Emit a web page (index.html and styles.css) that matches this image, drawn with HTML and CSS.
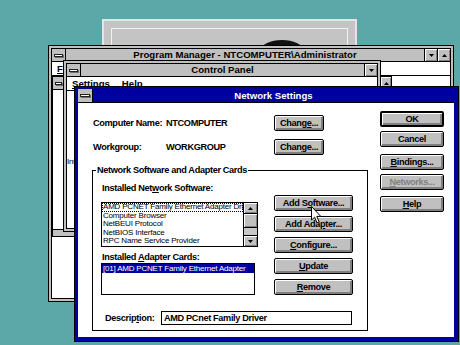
FILE: index.html
```html
<!DOCTYPE html>
<html>
<head>
<meta charset="utf-8">
<title>Network Settings</title>
<link rel="stylesheet" href="styles.css">
</head>
<body>
<div class="desktop">

  <div class="splash">
    <div class="splash-inner">
      <svg class="logo" width="44" height="12" viewBox="0 0 44 12"><ellipse cx="22" cy="11" rx="21" ry="10" fill="#111"/></svg>
    </div>
  </div>

  <div class="win pm">
    <div class="win-inner">
      <div class="titlebar">
        <div class="sysbox"><span class="sysbar"></span></div>
        <div class="title">Program Manager - NTCOMPUTER\Administrator</div>
        <div class="tbtn"><svg width="5" height="3" viewBox="0 0 5 3"><path d="M0 0H5L2.5 3Z"/></svg></div>
        <div class="tbtn"><svg width="5" height="3" viewBox="0 0 5 3"><path d="M0 3H5L2.5 0Z"/></svg></div>
      </div>
      <div class="menubar"><span class="menuitem"><u>F</u>ile</span></div>
      <div class="client">
        <div class="child">
          <div class="child-title">
            <div class="sysbox small"><span class="sysbar small"></span></div>
            <div class="child-caption"></div>
            <div class="tbtn small"><svg width="5" height="3" viewBox="0 0 5 3"><path d="M0 3H5L2.5 0Z"/></svg></div>
          </div>
          <div class="child-body"></div>
          <div class="hscroll"><span class="sbtn"></span></div>
        </div>
      </div>
    </div>
  </div>

  <div class="win cp">
    <div class="win-inner">
      <div class="titlebar">
        <div class="sysbox"><span class="sysbar"></span></div>
        <div class="title">Control Panel</div>
        <div class="tbtn"><svg width="5" height="3" viewBox="0 0 5 3"><path d="M0 0H5L2.5 3Z"/></svg></div>
      </div>
      <div class="menubar"><span class="menuitem"><u>S</u>ettings</span><span class="menuitem"><u>H</u>elp</span></div>
      <div class="client cp-client">
        <span class="icon-label">International</span>
      </div>
    </div>
  </div>

  <div class="dlg">
    <div class="dlg-title">
      <div class="sysbox"><span class="sysbar"></span></div>
      <div class="title">Network Settings</div>
    </div>
    <div class="dlg-body">
      <div class="dlg-main">
        <div class="field-row">
          <span class="lbl">Computer Name:</span>
          <span class="val">NTCOMPUTER</span>
          <button class="btn">Chang<u>e</u>...</button>
        </div>
        <div class="field-row">
          <span class="lbl">Workgroup:</span>
          <span class="val">WORKGROUP</span>
          <button class="btn">Chan<u>g</u>e...</button>
        </div>
        <fieldset class="group">
          <legend>Network Software and Adapter Cards</legend>
          <div class="group-grid">
            <div class="lists">
              <div class="lbl">Installed Net<u>w</u>ork Software:</div>
              <div class="listbox lb1">
                <ul class="items">
                  <li class="focus">AMD PCNET Family Ethernet Adapter Driver</li>
                  <li>Computer Browser</li>
                  <li>NetBEUI Protocol</li>
                  <li>NetBIOS Interface</li>
                  <li>RPC Name Service Provider</li>
                </ul>
                <div class="vscroll">
                  <span class="sbtn"><svg width="5" height="3" viewBox="0 0 5 3"><path d="M0 3H5L2.5 0Z"/></svg></span>
                  <span class="thumb"></span>
                  <span class="track"></span>
                  <span class="sbtn"><svg width="5" height="3" viewBox="0 0 5 3"><path d="M0 0H5L2.5 3Z"/></svg></span>
                </div>
              </div>
              <div class="lbl lbl2">Installed <u>A</u>dapter Cards:</div>
              <div class="listbox lb2">
                <ul class="items">
                  <li class="sel">[01] AMD PCNET Family Ethernet Adapter</li>
                </ul>
              </div>
            </div>
            <div class="midbtns">
              <button class="btn">Add S<u>o</u>ftware...</button>
              <button class="btn">Add Ada<u>p</u>ter...</button>
              <button class="btn"><u>C</u>onfigure...</button>
              <button class="btn"><u>U</u>pdate</button>
              <button class="btn"><u>R</u>emove</button>
            </div>
            <div class="desc-row">
              <span class="lbl">Descrip<u>t</u>ion:</span>
              <div class="textbox">AMD PCnet Family Driver</div>
            </div>
          </div>
        </fieldset>
      </div>
      <div class="dlg-side">
        <button class="btn default">OK</button>
        <button class="btn">Cancel</button>
        <button class="btn gap7"><u>B</u>indings...</button>
        <button class="btn disabled"><u>N</u>etworks...</button>
        <button class="btn gap6"><u>H</u>elp</button>
      </div>
    </div>
  </div>

  <svg class="cursor" width="12" height="18" viewBox="0 0 12 18"><path d="M0.5 0.5V14L3.6 11.2L6 16.8L8.2 15.8L5.8 10.4H9.8Z" fill="#fff" stroke="#000" stroke-width="1" stroke-linejoin="miter"/></svg>
</div>
</body>
</html>
```
FILE: styles.css
```css
html, body {
  margin: 0;
  padding: 0;
}
body {
  background: #5ca8a8;
  font-family: "Liberation Sans", Arial, sans-serif;
}
.desktop {
  position: relative;
  width: 460px;
  height: 345px;
  overflow: hidden;
  background: #5ca8a8;
}

/* background splash window */
.splash {
  position: absolute;
  left: 102px;
  top: 19px;
  width: 255px;
  height: 120px;
  box-sizing: border-box;
  background: #c4c4c4;
  border: 2px solid #e4e4e4;
  padding: 7px;
}
.splash-inner {
  height: 100%;
  box-sizing: border-box;
  border: 1px solid #f2f2f2;
  padding-top: 10px;
}
.logo {
  display: block;
  margin-left: 148px;
}

/* generic window */
.win {
  position: absolute;
  box-sizing: border-box;
  border: 1px solid #000;
  background: #c0c0c0;
  padding: 2px;
  display: flex;
  flex-direction: column;
}
.win-inner {
  flex: 1;
  min-height: 0;
  border: 1px solid #000;
  background: #fff;
  display: flex;
  flex-direction: column;
}
.titlebar {
  height: 12px;
  flex: none;
  display: flex;
  background: #c0c0c0;
  border-bottom: 1px solid #000;
}
.sysbox {
  width: 13px;
  flex: none;
  border-right: 1px solid #000;
  background: #c0c0c0;
  display: flex;
  align-items: center;
  justify-content: center;
}
.sysbar {
  width: 7px;
  height: 1px;
  border: 1px solid #202020;
  background: #fff;
  box-shadow: 1px 1px 0 #707070;
}
.title {
  flex: 1;
  text-align: center;
  font: bold 9.6px/12px "Liberation Sans", Arial, sans-serif;
  color: #000;
  white-space: nowrap;
  overflow: hidden;
}
.tbtn {
  width: 12px;
  flex: none;
  border-left: 1px solid #000;
  background: #c0c0c0;
  box-shadow: inset 1px 1px 0 #fff, inset -1px -1px 0 #808080;
  display: flex;
  align-items: center;
  justify-content: center;
}
.tbtn svg, .sbtn svg {
  display: block;
  fill: #000;
}
.menubar {
  height: 13px;
  flex: none;
  display: flex;
  gap: 12px;
  padding-left: 5px;
  background: #fff;
  border-bottom: 1px solid #000;
  font: bold 9.6px/13px "Liberation Sans", Arial, sans-serif;
  color: #000;
}
.client {
  flex: 1;
  position: relative;
  background: #fff;
}

/* Program Manager */
.pm {
  left: 48px;
  top: 45px;
  width: 406px;
  height: 257px;
}
.child {
  position: absolute;
  left: 0;
  top: 0;
  width: 340px;
  height: 161px;
  box-sizing: border-box;
  border: 1px solid #000;
  display: flex;
  flex-direction: column;
  background: #fff;
}
.child-title {
  height: 12px;
  display: flex;
  background: #c0c0c0;
  border-bottom: 1px solid #000;
}
.sysbox.small {
  width: 10px;
}
.sysbar.small {
  width: 5px;
}
.child-caption {
  flex: 1;
}
.tbtn.small {
  width: 10px;
}
.child-body {
  flex: 1;
}
.hscroll {
  height: 6px;
  border-top: 1px solid #000;
  background: #c0c0c0;
  display: flex;
}

/* Control Panel */
.cp {
  left: 63px;
  top: 60px;
  width: 318px;
  height: 172px;
}
.cp-client {
  padding-top: 66px;
  font: 8px/10px "Liberation Sans", Arial, sans-serif;
  letter-spacing: -0.25px;
  color: #000;
}
.icon-label {
  display: block;
  white-space: nowrap;
}

/* Dialog */
.dlg {
  position: absolute;
  left: 74px;
  top: 86px;
  width: 385px;
  height: 256px;
  box-sizing: border-box;
  border: 1px solid #000;
  background: #0000a0;
  padding: 2px 4px 4px 3px;
  display: flex;
  flex-direction: column;
}
.dlg-title {
  height: 13px;
  flex: none;
  display: flex;
  background: #0000a0;
  border-bottom: 1px solid #000;
}
.dlg-title .sysbox {
  width: 14px;
}
.dlg-title .sysbar {
  width: 8px;
}
.dlg-title .title {
  color: #fff;
  line-height: 13px;
}
.dlg-body {
  flex: 1;
  background: #fff;
  display: grid;
  grid-template-columns: 276px 64px;
  column-gap: 12px;
  padding: 0 10px 0 14px;
  align-items: start;
  font: bold 9.2px/12px "Liberation Sans", Arial, sans-serif;
  letter-spacing: -0.35px;
  color: #000;
}
.dlg-main {
  padding-top: 12px;
  display: flex;
  flex-direction: column;
}
.field-row {
  display: grid;
  grid-template-columns: 73px 108px 50px;
  align-items: center;
  height: 16px;
  padding-left: 1px;
}
.field-row + .field-row {
  margin-top: 8px;
}
.lbl, .val {
  line-height: 16px;
  white-space: nowrap;
}

.btn {
  font: inherit;
  letter-spacing: inherit;
  color: #000;
  padding: 0;
  margin: 0;
  height: 16px;
  box-sizing: border-box;
  background: #c0c0c0;
  border: 1px solid #000;
  border-radius: 2px;
  box-shadow: inset 1px 1px 0 #fff, inset -1px -1px 0 #808080, inset -2px -2px 0 #808080;
  line-height: 12px;
  text-align: center;
  white-space: nowrap;
}
.btn.default {
  border-width: 2px;
}
.btn.disabled {
  color: #808080;
}

.dlg-side {
  padding-top: 8px;
  display: flex;
  flex-direction: column;
}
.dlg-side .btn {
  width: 64px;
}
.dlg-side .btn + .btn {
  margin-top: 4px;
}
.dlg-side .btn.gap7 {
  margin-top: 7px;
}
.dlg-side .btn.gap6 {
  margin-top: 6px;
}

.group {
  margin: 9px 0 0 0;
  padding: 6px 9px 5px 8px;
  border: 1px solid #000;
  min-width: 0;
}
.group legend {
  padding: 0 1px;
  margin-left: -5px;
  line-height: 12px;
  white-space: nowrap;
}
.group-grid {
  display: grid;
  grid-template-columns: 157px 79px;
  column-gap: 16px;
}
.lists {
  display: flex;
  flex-direction: column;
}
.lists .lbl {
  line-height: 12px;
  padding-left: 1px;
}
.lists .lbl2 {
  margin-top: 4px;
}
.listbox {
  display: flex;
  border: 1px solid #000;
  background: #fff;
  box-sizing: border-box;
  overflow: hidden;
}
.lb1 {
  margin-top: 8px;
  height: 45px;
}
.lb2 {
  width: 154px;
  height: 32px;
}
.items {
  flex: 1;
  min-width: 0;
  list-style: none;
  margin: 0;
  padding: 0;
  font: 8px/8.6px "Liberation Sans", Arial, sans-serif;
  letter-spacing: -0.2px;
  overflow: hidden;
}
.items li {
  white-space: nowrap;
  overflow: hidden;
  padding-left: 1px;
  height: 8.6px;
}
.items li.focus {
  outline: 1px dotted #000;
  outline-offset: -1px;
}
.items li.sel {
  background: #0000a0;
  color: #fff;
  height: 9px;
  line-height: 9px;
}
.vscroll {
  width: 13px;
  flex: none;
  border-left: 1px solid #000;
  display: flex;
  flex-direction: column;
  background: #c0c0c0;
}
.sbtn {
  height: 10px;
  flex: none;
  background: #c0c0c0;
  box-shadow: inset 1px 1px 0 #fff, inset -1px -1px 0 #808080;
  display: flex;
  align-items: center;
  justify-content: center;
  border-bottom: 1px solid #000;
}
.vscroll .sbtn:last-child {
  border-bottom: 0;
  border-top: 1px solid #000;
}
.thumb {
  height: 13px;
  flex: none;
  background: #c0c0c0;
  box-shadow: inset 1px 1px 0 #fff, inset -1px -1px 0 #808080;
  border-bottom: 1px solid #000;
}
.track {
  flex: 1;
  background: #c8c8c8;
}
.midbtns {
  display: flex;
  flex-direction: column;
  gap: 5px;
  padding-top: 13px;
}
.midbtns .btn {
  width: 79px;
}
.desc-row {
  grid-column: 1 / 3;
  display: flex;
  align-items: center;
  margin-top: 16px;
  padding-left: 4px;
}
.desc-row .lbl {
  width: 56px;
  line-height: 14px;
}
.textbox {
  width: 191px;
  height: 14px;
  box-sizing: border-box;
  border: 1px solid #000;
  padding-left: 2px;
  line-height: 12px;
  white-space: nowrap;
}

.cursor {
  position: absolute;
  left: 311px;
  top: 206px;
}
```
